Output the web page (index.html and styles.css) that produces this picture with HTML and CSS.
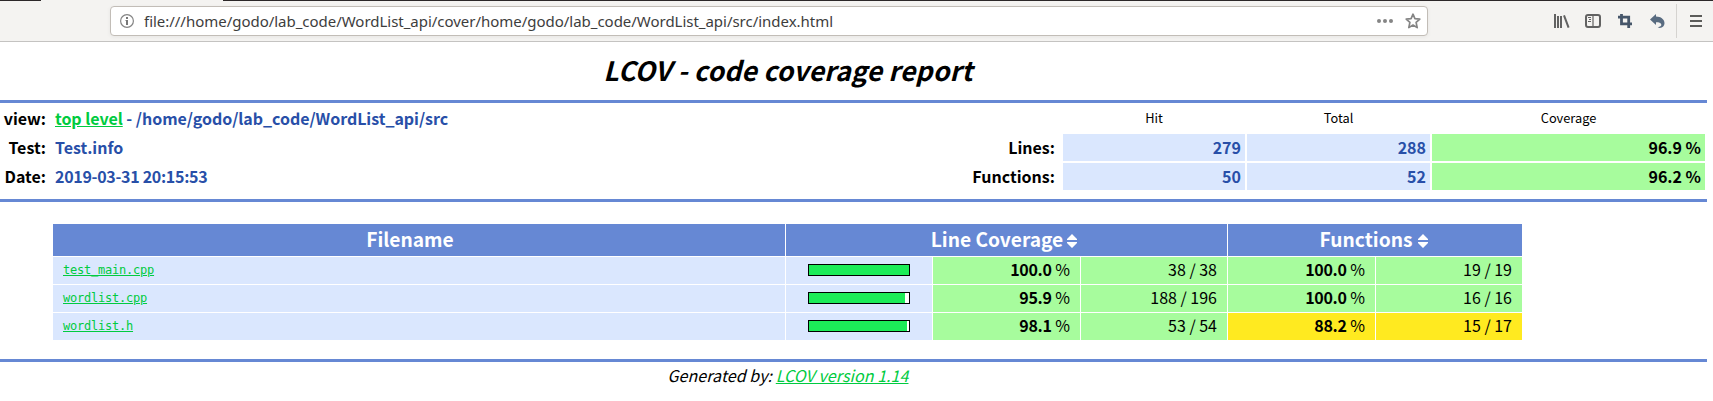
FILE: index.html
```html
<!DOCTYPE html>
<html lang="en">
<head>
<meta charset="utf-8">
<title>LCOV - code coverage report</title>
<link rel="stylesheet" href="styles.css">
</head>
<body>
<header class="toolbar">
  <div class="url-bar">
    <svg class="info" width="14" height="14" viewBox="0 0 14 14"><circle cx="7" cy="7" r="6.4" fill="none" stroke="#858585" stroke-width="1.2"/><path d="M6 3h2v2H6zM5.500 6H8v5H6V7h-.5z" fill="#777"/></svg>
    <span class="url">file:///home/godo/lab_code/WordList_api/cover/home/godo/lab_code/WordList_api/src/index.html</span>
    <svg class="dots" width="16" height="4" viewBox="0 0 16 4" fill="#858585"><circle cx="2" cy="2" r="2"/><circle cx="8" cy="2" r="2"/><circle cx="14" cy="2" r="2"/></svg>
    <svg class="star" width="16" height="16" viewBox="0 0 16 16"><path d="M8 1.200l1.900 4.500 4.900.4-3.700 3.200 1.100 5.300L8 12l-4.200 2.600 1.100-5.300L1.200 6.100l4.900-.4z" fill="none" stroke="#858585" stroke-width="1.700" stroke-linejoin="round"/></svg>
  </div>
  <nav class="tools">
    <svg width="16" height="14" viewBox="0 0 16 14"><path d="M1 0v14M4 2v12M7 2v12M10 1.300l4.600 12.300" fill="none" stroke="#626262" stroke-width="2"/></svg>
    <svg class="sidebar" width="16" height="14" viewBox="0 0 16 14"><rect x="1" y="1" width="14" height="12" rx="2" fill="none" stroke="#626262" stroke-width="2"/><path d="M8 1v12" stroke="#626262" stroke-width="1.200"/><path d="M3 3.500h3M4 5.500h2M3 7.500h3" stroke="#626262"/></svg>
    <svg class="crop" width="14" height="14" viewBox="0 0 14 14"><path d="M0 3.200h10.700V14M3.500 0v9.800H14" fill="none" stroke="#46566a" stroke-width="2.800"/></svg>
    <svg class="undo" width="15" height="14" viewBox="0 0 15 14"><path d="M0 5.500L6 0v2.500c5 0 8.500 2.800 8.500 6.800 0 2.700-1.800 4.300-4.800 4.700l-2-.8c2.700-.3 3.800-1.400 3.600-2.700C11 8.900 9 8.300 6 8.300V11z" fill="#586b80"/></svg>
    <span class="divider"></span>
    <svg class="menu" width="12" height="14" viewBox="0 0 12 14"><path d="M0 2h12M0 7h12M0 12h12" stroke="#5c5c5a" stroke-width="2"/></svg>
  </nav>
</header>

<main class="report">
  <h1 class="title">LCOV - code coverage report</h1>
  <div class="ruler"></div>
  <section class="summary">
    <div class="item">view:</div>
    <div class="value path"><a href="#">top level</a> - /home/godo/lab_code/WordList_api/src</div>
    <div></div><div class="cov-head">Hit</div><div class="cov-head">Total</div><div class="cov-head">Coverage</div>
    <div class="item">Test:</div>
    <div class="value">Test.info</div>
    <div class="item">Lines:</div><div class="entry">279</div><div class="entry">288</div><div class="entry high">96.9 %</div>
    <div class="item">Date:</div>
    <div class="value date">2019-03-31 20:15:53</div>
    <div class="item">Functions:</div><div class="entry">50</div><div class="entry">52</div><div class="entry high">96.2 %</div>
  </section>
  <div class="ruler"></div>

  <section class="files">
    <div class="head name">Filename</div>
    <div class="head lines">Line Coverage<svg class="sort" width="10" height="14" viewBox="0 0 10 14"><path d="M5 0l5 5v1H0V5zM0 8h10v1l-5 5-5-5z" fill="#fff"/></svg></div>
    <div class="head funcs">Functions<svg class="sort" width="10" height="14" viewBox="0 0 10 14"><path d="M5 0l5 5v1H0V5zM0 8h10v1l-5 5-5-5z" fill="#fff"/></svg></div>

    <div class="file"><a href="#">test_main.cpp</a></div>
    <div class="bar-cell"><div class="bar"><div class="fill" style="width:100%"></div></div></div>
    <div class="num high"><b>100.0</b> %</div><div class="num high">38 / 38</div>
    <div class="num high"><b>100.0</b> %</div><div class="num high">19 / 19</div>

    <div class="file"><a href="#">wordlist.cpp</a></div>
    <div class="bar-cell"><div class="bar"><div class="fill" style="width:96%"></div></div></div>
    <div class="num high"><b>95.9</b> %</div><div class="num high">188 / 196</div>
    <div class="num high"><b>100.0</b> %</div><div class="num high">16 / 16</div>

    <div class="file"><a href="#">wordlist.h</a></div>
    <div class="bar-cell"><div class="bar"><div class="fill" style="width:98%"></div></div></div>
    <div class="num high"><b>98.1</b> %</div><div class="num high">53 / 54</div>
    <div class="num medium"><b>88.2</b> %</div><div class="num medium">15 / 17</div>
  </section>
  <div class="ruler"></div>
  <footer class="version">Generated by: <a href="#">LCOV version 1.14</a></footer>
</main>
</body>
</html>
```
FILE: styles.css
```css
* { box-sizing: border-box; }
body {
  margin: 0;
  background: #fff;
  color: #000;
  font: 16px/26px "Noto Sans CJK SC", "Noto Sans", sans-serif;
  overflow: hidden;
}
a { color: #00cb40; text-decoration: underline; }
svg { display: block; flex: none; }

.toolbar {
  display: flex;
  height: 42px;
  padding: 5px 0 0 110px;
  background: #f4f3f1;
  border-top: 1px solid;
  border-image: linear-gradient(to right, #2c2829 42px, #f4f3f1 42px, #f4f3f1 224px, #2c2829 224px) 1;
  box-shadow: inset 0 -1px #c4c3c1;
}
.url-bar {
  display: flex;
  align-items: center;
  width: 1318px;
  height: 30px;
  padding: 0 6px 0 9px;
  background: #fff;
  border: 1px solid #c2bdb7;
  border-radius: 4px;
  box-shadow: 0 1px 4px rgba(0, 0, 0, .06);
}
.url {
  flex: 1;
  padding-left: 10px;
  color: #3d3d3d;
  font: 15px/28px "Noto Sans", sans-serif;
  letter-spacing: -.025px;
  white-space: nowrap;
}
.star { margin-left: 12px; }
.tools { display: flex; align-items: center; height: 30px; margin-left: 126px; }
.sidebar { margin-left: 15px; }
.crop { margin-left: 17px; }
.undo { margin-left: 18px; }
.divider { width: 1px; height: 34px; margin: 0 13px 0 11px; background: #d5d3d0; }

.report { width: 1707px; }
.title {
  margin: 0;
  padding: 8px 0 0;
  width: 1576px;
  height: 58px;
  font-size: 26.670px;
  line-height: 40px;
  letter-spacing: .14px;
  font-style: italic;
  font-weight: bold;
  text-align: center;
}
.ruler { height: 3px; background: #6688d4; }

.summary {
  display: grid;
  grid-template-columns: 46px 850px 161px 182px 183px 273px;
  grid-template-rows: 27px 27px 27px;
  gap: 2px;
  height: 96px;
  padding: 2px 2px 0 0;
  font-weight: bold;
}
.item { text-align: right; }
.summary > .item:nth-child(6n + 3) { padding-right: 6px; }
.value { padding-left: 9px; margin-left: -2px; color: #284fa8; }
.path { letter-spacing: -.04px; }
.date { letter-spacing: -.3px; }
.cov-head { font-size: 12.800px; font-weight: normal; text-align: center; }
.entry { padding-right: 4px; text-align: right; color: #284fa8; background: #dae7fe; }
.summary .high { color: #000; }
.high { background: #a7fc9d; }
.medium { background: #ffea20; }

.files {
  display: grid;
  grid-template-columns: 732px 146px 147px 146px 147px 146px;
  grid-template-rows: 32px 27px 27px 27px;
  gap: 1px;
  height: 157px;
  padding: 22px 0 0 53px;
}
.head {
  display: flex;
  justify-content: center;
  align-items: center;
  height: 32px;
  padding-bottom: 2px;
  background: #6688d4;
  color: #fff;
  font-size: 19.200px;
  font-weight: bold;
  line-height: 30px;
}
.name { padding-right: 18px; }
.lines { grid-column: 2 / 5; padding-right: 5px; }
.funcs { grid-column: 5 / 7; padding-right: 2px; }
.sort { margin: 4px 0 0 4px; }
.funcs .sort { margin-left: 6px; }
.file { padding-left: 10px; background: #dae7fe; font: 12px/27px "DejaVu Sans Mono", monospace; letter-spacing: -.22px; }
.bar-cell { display: flex; align-items: center; justify-content: center; padding-bottom: 1px; background: #dae7fe; }
.bar { width: 102px; height: 12px; border: 1px solid #000; background: #fff; }
.fill { height: 10px; background: #1cec58; }
.num { padding-right: 10px; text-align: right; line-height: 25px; }
.num b { letter-spacing: -.3px; }
.version { width: 1576px; padding-top: 1px; letter-spacing: .06px; line-height: 25px; font-style: italic; text-align: center; }
```
